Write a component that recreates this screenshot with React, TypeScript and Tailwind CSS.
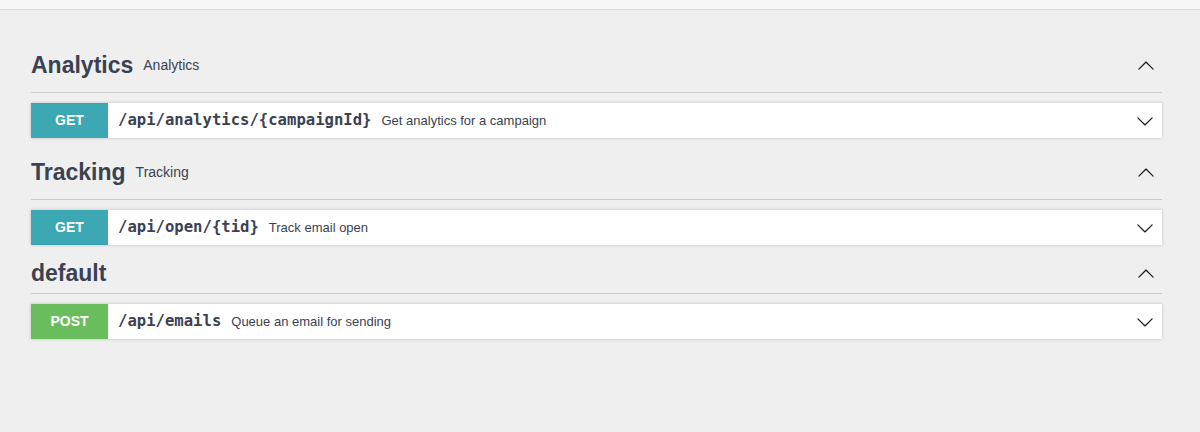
import React from "react";

type Op = {
  method: "GET" | "POST";
  path: string;
  summary: string;
};

type Tag = {
  name: string;
  description?: string;
  ops: Op[];
};

const tags: Tag[] = [
  {
    name: "Analytics",
    description: "Analytics",
    ops: [{ method: "GET", path: "/api/analytics/{campaignId}", summary: "Get analytics for a campaign" }],
  },
  {
    name: "Tracking",
    description: "Tracking",
    ops: [{ method: "GET", path: "/api/open/{tid}", summary: "Track email open" }],
  },
  {
    name: "default",
    ops: [{ method: "POST", path: "/api/emails", summary: "Queue an email for sending" }],
  },
];

const arrowPath =
  "M17.418 6.109c.272-.268.709-.268.979 0s.271.701 0 .969l-7.908 7.83c-.27.268-.707.268-.979 0l-7.908-7.83c-.27-.268-.27-.701 0-.969.271-.268.709-.268.979 0L10 13.25l7.418-7.141z";

function Arrow({ up }: { up?: boolean }) {
  return (
    <svg
      width="18"
      height="18"
      viewBox="0 0 20 20"
      className={up ? "rotate-180" : ""}
      fill="#1f1f1f"
    >
      <path d={arrowPath} />
    </svg>
  );
}

function OpBlock({ op }: { op: Op }) {
  const badge = op.method === "GET" ? "bg-[#3ba8b3]" : "bg-[#6abd5c]";
  return (
    <div className="flex h-[35px] items-center bg-white shadow-[0_0_3px_rgba(0,0,0,0.22)]">
      <div
        className={`${badge} flex h-full w-[77px] shrink-0 items-center justify-center text-[14px] font-bold text-white`}
      >
        {op.method}
      </div>
      <span className="ml-[10px] font-['DejaVu_Sans_Mono',monospace] text-[15.6px] font-bold text-[#3b4151]">
        {op.path}
      </span>
      <span className="ml-[10px] text-[13px] text-[#3b4151]">{op.summary}</span>
      <div className="ml-auto mr-[8px] flex items-center">
        <Arrow />
      </div>
    </div>
  );
}

function TagSection({ tag, first }: { tag: Tag; first?: boolean }) {
  return (
    <section className={first ? "" : tag.description ? "mt-[20px]" : "mt-[14px]"}>
      <div
        className={`flex items-center border-b border-[#c9cacd] ${
          tag.description ? "pb-[12px]" : "pb-[5px]"
        }`}
      >
        <h3 className="text-[23px] font-bold leading-[29px] text-[#3b4151]">{tag.name}</h3>
        {tag.description && (
          <span className="ml-[10px] text-[14px] text-[#3b4151]">{tag.description}</span>
        )}
        <div className="ml-auto mr-[7px] flex items-center">
          <Arrow up />
        </div>
      </div>
      <div className="mt-[10px] flex flex-col gap-[15px]">
        {tag.ops.map((op) => (
          <OpBlock key={op.path} op={op} />
        ))}
      </div>
    </section>
  );
}

export default function App() {
  return (
    <div className="min-h-[432px] bg-[#efefef] font-['Liberation_Sans',Arial,sans-serif]">
      <div className="h-[10px] border-b border-[#d9d9d9] bg-[#f7f7f7]" />
      <div className="pl-[31px] pr-[38px] pt-[41px]">
        {tags.map((tag, i) => (
          <TagSection key={tag.name} tag={tag} first={i === 0} />
        ))}
      </div>
    </div>
  );
}
